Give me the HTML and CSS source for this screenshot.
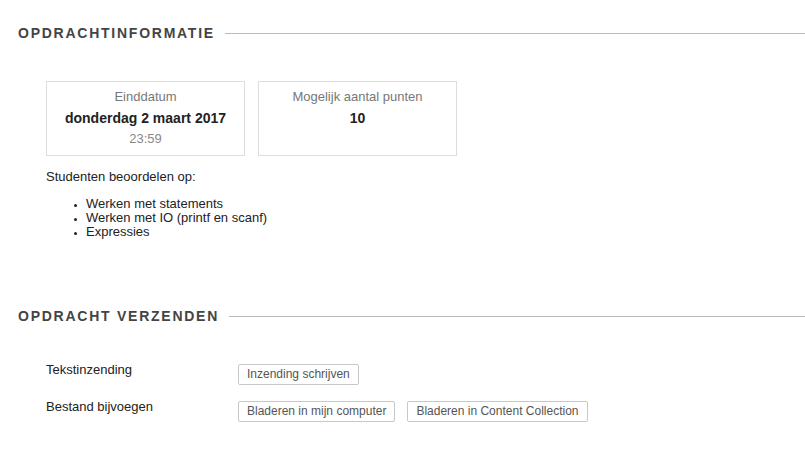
FILE: index.html
```html
<!DOCTYPE html>
<html lang="nl">
<head>
<meta charset="utf-8">
<link rel="stylesheet" href="styles.css">
</head>
<body>
<section class="section info">
  <h2 class="section-title"><span class="title-text">Opdrachtinformatie</span><span class="title-line"></span></h2>
  <div class="section-body">
    <div class="cards">
      <div class="card">
        <div class="card-label">Einddatum</div>
        <div class="card-value">donderdag 2 maart 2017</div>
        <div class="card-sub">23:59</div>
      </div>
      <div class="card">
        <div class="card-label">Mogelijk aantal punten</div>
        <div class="card-value">10</div>
      </div>
    </div>
    <p class="intro">Studenten beoordelen op:</p>
    <ul class="criteria">
      <li>Werken met statements</li>
      <li>Werken met IO (printf en scanf)</li>
      <li>Expressies</li>
    </ul>
  </div>
</section>
<section class="section submit">
  <h2 class="section-title"><span class="title-text">Opdracht verzenden</span><span class="title-line"></span></h2>
  <div class="section-body">
    <div class="form-row">
      <div class="form-label">Tekstinzending</div>
      <div class="form-controls">
        <button class="btn" type="button">Inzending schrijven</button>
      </div>
    </div>
    <div class="form-row">
      <div class="form-label">Bestand bijvoegen</div>
      <div class="form-controls">
        <button class="btn" type="button">Bladeren in mijn computer</button>
        <button class="btn" type="button">Bladeren in Content Collection</button>
      </div>
    </div>
  </div>
</section>
</body>
</html>
```
FILE: styles.css
```css
html, body {
  margin: 0;
  padding: 0;
  background: #fff;
}
body {
  font-family: "Liberation Sans", Arial, sans-serif;
  color: #222;
  font-size: 13px;
}
.section-title {
  display: flex;
  align-items: center;
  margin: 0;
  padding-left: 18px;
  height: 20px;
}
.title-text {
  font-size: 14px;
  font-weight: bold;
  text-transform: uppercase;
  letter-spacing: 1.75px;
  color: #444;
  white-space: nowrap;
}
.title-line {
  flex: 1;
  height: 1px;
  background: #bbb;
  margin-left: 10px;
}
.info {
  padding-top: 23px;
}
.info .section-body {
  padding: 38px 0 0 46px;
}
.cards {
  display: flex;
  gap: 13px;
}
.card {
  width: 197px;
  height: 73px;
  border: 1px solid #ddd;
  text-align: center;
}
.card-label {
  color: #777;
  font-size: 13px;
  margin-top: 7px;
  line-height: 15px;
}
.card-value {
  font-weight: bold;
  font-size: 14px;
  color: #222;
  margin-top: 6px;
  line-height: 17px;
}
.card-sub {
  color: #888;
  font-size: 13px;
  margin-top: 4px;
  line-height: 15px;
}
.intro {
  margin: 13px 0 0 0;
  line-height: 15px;
}
.criteria {
  margin: 13px 0 0 0;
  padding-left: 40px;
  line-height: 14px;
  font-size: 13px;
}
.criteria li::marker {
  font-size: 9px;
}
.submit {
  padding-top: 67px;
}
.submit .section-body {
  padding: 32px 0 0 46px;
}
.form-row {
  display: flex;
  align-items: flex-start;
  margin-bottom: 10px;
}
.form-label {
  width: 192px;
  line-height: 15px;
  padding-top: 4px;
}
.form-controls {
  display: flex;
  gap: 12px;
  margin-top: 6px;
}
.btn {
  font-family: "Liberation Sans", Arial, sans-serif;
  font-size: 12px;
  color: #555;
  background: #fff;
  border: 1px solid #c8c8c8;
  border-radius: 2px;
  padding: 0 8px;
  height: 21px;
  line-height: 19px;
  margin: 0;
}
```
